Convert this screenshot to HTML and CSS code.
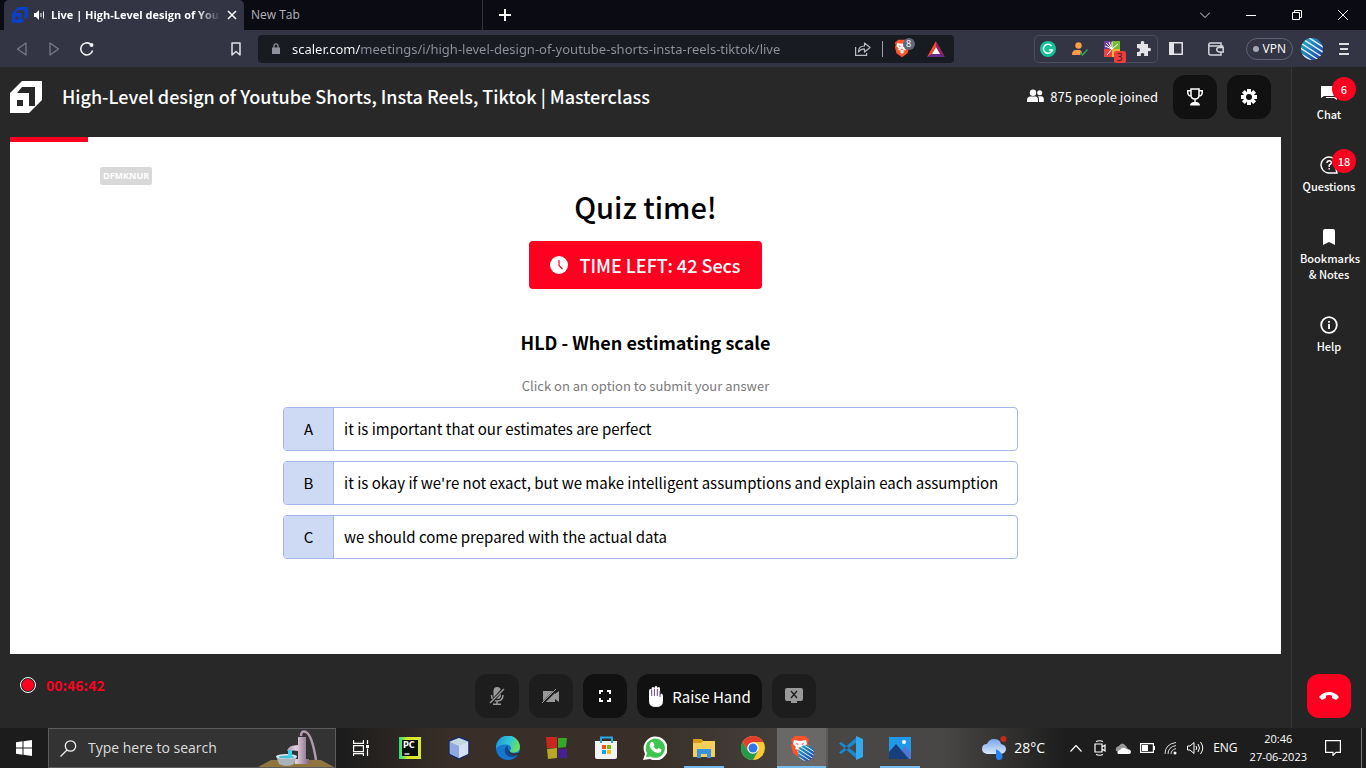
FILE: index.html
```html
<!DOCTYPE html>
<html lang="en">
<head>
<meta charset="utf-8">
<title>Live | High-Level design of Youtube Shorts, Insta Reels, Tiktok</title>
<link rel="stylesheet" href="styles.css">
</head>
<body>
<svg class="defs" width="0" height="0" aria-hidden="true">
  <defs>
    <symbol id="cube" viewBox="0 0 32 32"><path fill-rule="evenodd" d="M0 12 12 0H32V19L19 32H0ZM7 12H19V25H25V6H12ZM7 19V25H13V19Z"/></symbol>
    <symbol id="lion" viewBox="0 0 20 24"><path fill="#fb542b" d="M5 1h10l2 2 2 1-1 4 1 2-2 8-7 5-7-5-2-8 1-2-1-4 2-1z"/><path fill="#fff" d="M4 5l6 1 6-1 1 4-3 3 1 2-5 1-5-1 1-2-3-3zM7 16l3-1 3 1-3 3z"/><path fill="#fb542b" d="M6 8l3 1-2 1zM14 8l-3 1 2 1zM8 13l2-1 2 1-2 1z"/></symbol>
    <symbol id="globe" viewBox="0 0 22 22"><clipPath id="gc"><circle cx="11" cy="11" r="11"/></clipPath><linearGradient id="gg" x1="0" y1="0" x2="1" y2="1"><stop offset="0" stop-color="#2fb4c8"/><stop offset=".6" stop-color="#1e6bb5"/><stop offset="1" stop-color="#2a2fa8"/></linearGradient><g clip-path="url(#gc)"><path fill="url(#gg)" d="M0 0h22v22H0z"/><path d="M2-4 30 14M0 0 28 18M-2 4 26 22M-4 8 24 26M-6 12 22 30" stroke="#e8f6fb" stroke-width="1.3"/></g></symbol>
  </defs>
</svg>

<header class="tabstrip">
  <div class="tab tab-active">
    <svg class="tab-logo" width="16" height="16" fill="#0b3fc4"><use href="#cube"/></svg>
    <svg width="11" height="10" viewBox="0 0 11 10" fill="#fff"><path d="M0 3h2l3-3v10L2 7H0z"/><path d="M7 3v4M9.500 1.500v7" stroke="#fff" fill="none"/></svg>
    <span class="tab-title">Live | High-Level design of You</span>
    <button class="bare" aria-label="Close tab"><svg width="10" height="10" viewBox="0 0 10 10" stroke="#fff" stroke-width="1.500"><path d="M1 1l8 8M9 1 1 9"/></svg></button>
  </div>
  <div class="tab tab-idle">New Tab</div>
  <button class="bare new-tab" aria-label="New tab"><svg width="12" height="12" viewBox="0 0 12 12" stroke="#fff" stroke-width="2"><path d="M6 0v12M0 6h12"/></svg></button>
  <div class="window-buttons">
    <button class="bare" aria-label="Search tabs"><svg width="10" height="6" viewBox="0 0 10 6" fill="none" stroke="#ddd"><path d="M0 .5l5 5 5-5"/></svg></button>
    <button class="bare" aria-label="Minimize"><svg width="10" height="10" viewBox="0 0 10 10" stroke="#fff"><path d="M0 5.500h10"/></svg></button>
    <button class="bare" aria-label="Restore"><svg width="10" height="10" viewBox="0 0 10 10" fill="none" stroke="#fff"><path d="M.5 2.500h7v7h-7zM2.500 2.500v-2h7v7h-2"/></svg></button>
    <button class="bare" aria-label="Close"><svg width="10" height="10" viewBox="0 0 10 10" stroke="#fff"><path d="M0 0l10 10M10 0 0 10"/></svg></button>
  </div>
</header>

<nav class="toolbar" aria-label="Browser">
  <div class="nav-buttons">
    <button class="bare" aria-label="Back"><svg width="12" height="14" viewBox="0 0 12 14" fill="none" stroke="#777986" stroke-width="1.300"><path d="M10 1v12L1.500 7z" stroke-linejoin="round"/></svg></button>
    <button class="bare" aria-label="Forward"><svg width="12" height="14" viewBox="0 0 12 14" fill="none" stroke="#777986" stroke-width="1.300"><path d="M2 1v12l8.500-6z" stroke-linejoin="round"/></svg></button>
    <button class="bare" aria-label="Reload"><svg width="14" height="14" viewBox="0 0 14 14" fill="none" stroke="#eee" stroke-width="1.600"><path d="M12.600 8.500A6 6 0 1 1 10.500 2.200"/><circle cx="11.500" cy="3" r="2" fill="#eee" stroke="none"/></svg></button>
  </div>
  <button class="bare" aria-label="Bookmark"><svg width="10" height="14" viewBox="0 0 10 14" fill="none" stroke="#e2e2e6" stroke-width="1.500"><path d="M1 1h8v12L5 9.500 1 13z" stroke-linejoin="round"/></svg></button>
  <div class="urlbar">
    <svg width="8" height="11" viewBox="0 0 8 11" fill="#8f929c"><path d="M0 4.500h8V11H0z"/><path d="M2 5V2.800a2 2 0 0 1 4 0V5" fill="none" stroke="#8f929c" stroke-width="1.300"/></svg>
    <input class="url" aria-label="Address" value="scaler.com/meetings/i/high-level-design-of-youtube-shorts-insta-reels-tiktok/live">
    <svg width="16" height="14" viewBox="0 0 16 14" fill="none" stroke="#b9bbc2" stroke-width="1.200"><path d="M.6 5v8.400h11V11"/><path d="M3.500 10q0-6 6-6V1l5.500 4.500L9.500 10V7q-3.500-.3-6 3z" stroke-linejoin="round"/></svg>
    <span class="url-rule"></span>
    <span class="shield"><svg width="16" height="19"><use href="#lion"/></svg><span class="shield-count">8</span></span>
    <svg width="18" height="16" viewBox="0 0 18 16"><path fill="#ff4724" d="M9 0 0 16l5-3 4-7z"/><path fill="#9e1f63" d="m9 0 9 16-5-3-4-7z"/><path fill="#662d91" d="M0 16h18l-5-3H5z"/><path fill="#fff" d="m9 6 4 7H5z"/></svg>
  </div>
  <div class="extensions">
    <svg width="16" height="16" viewBox="0 0 16 16"><circle cx="8" cy="8" r="8" fill="#15c39a"/><path d="M11.500 5A4.500 4.500 0 1 0 12.300 9H9" fill="none" stroke="#fff" stroke-width="1.500"/></svg>
    <svg width="16" height="14" viewBox="0 0 16 14"><circle cx="6.500" cy="3.500" r="3.200" fill="#ff9d45"/><path d="M0 13q0-5 4-5h4l2 2-2 3z" fill="#ff9d45"/><path d="m8.500 10.500 2 2.500 5-5.500" fill="none" stroke="#1fab5c" stroke-width="1.500"/></svg>
    <span class="ext-burst"><svg width="16" height="16" viewBox="0 0 16 16"><path fill="#7439a0" d="M0 0h8v8H0z"/><path fill="#74bb34" d="M8 0h8v8H8z"/><path fill="#f04242" d="M0 8h8v8H0z"/><path fill="#e8b53a" d="M8 8h8v8H8z"/><path d="M8 8 2 2M8 8V1M8 8l6-5M8 8l-5 6M8 8 5 1M8 8 1 5" stroke="#fff"/></svg><span class="burst-count">3</span></span>
    <svg width="15" height="15" viewBox="0 0 15 15" fill="#e4e4e8"><path d="M1 3h4q-1-3 1.500-3T8 3h4v4q3-1 3 1.500T12 10v5H8q1-3-1.500-3T5 15H1v-4q3 0 3-2T1 7z"/></svg>
  </div>
  <button class="bare" aria-label="Sidebar"><svg width="14" height="13" viewBox="0 0 14 13"><path d="M.8.800h12.400v11.400H.8z" fill="none" stroke="#e4e4e8" stroke-width="1.500"/><path d="M1 1h4v11H1z" fill="#e4e4e8"/></svg></button>
  <button class="bare" aria-label="Wallet"><svg width="16" height="14" viewBox="0 0 16 14" fill="none" stroke="#d4d4da" stroke-width="1.500"><path d="M13 4V1H2.500q-1.700 0-1.700 2v8q0 2 2 2H13v-3M1 4h13.500v2M15.200 5.500h-4q-2.500 0-2.500 2T11 10h4.200z"/></svg></button>
  <button class="vpn">VPN</button>
  <button class="bare" aria-label="Profile"><svg width="22" height="22"><use href="#globe"/></svg></button>
  <button class="bare" aria-label="Menu"><svg width="10" height="12" viewBox="0 0 10 12" stroke="#dedee2" stroke-width="2"><path d="M0 1h10M1 6h8M0 11h10"/></svg></button>
</nav>

<div class="app">
  <main class="meeting">
    <header class="meeting-head">
      <svg width="32" height="32" fill="#fff"><use href="#cube"/></svg>
      <h1 class="title">High-Level design of Youtube Shorts, Insta Reels, Tiktok | Masterclass</h1>
      <div class="joined"><svg width="17" height="14" viewBox="0 0 17 14" fill="#fff"><circle cx="6" cy="3.700" r="3.200"/><path d="M0 13V11q0-3.500 3.500-3.500h5Q11 7.500 11 11v2z"/><circle cx="12.700" cy="3.700" r="2.500"/><path d="M12 13v-3q0-1.800-1-2.700h3q2.800 0 2.800 3V13z"/></svg>875 people joined</div>
      <button class="tile" aria-label="Leaderboard"><svg width="16" height="18" viewBox="0 0 16 18" fill="none" stroke="#fff" stroke-width="1.500"><path d="M4 1h8v6q0 4-4 4T4 7zM4 2.800H.8V5Q1 8 4.500 8M12 2.800h3.200V5Q15 8 11.500 8M8 11v3"/><path d="M3 17.500q0-2.500 3-3.500h4q3 1 3 3.500z" fill="#fff" stroke="none"/></svg></button>
      <button class="tile" aria-label="Settings"><svg width="18" height="18" viewBox="0 0 18 18"><path d="M7 1h4v16H7zM1 7h16v4H1z" fill="#fff"/><path d="M7 1h4v16H7zM1 7h16v4H1z" fill="#fff" transform="rotate(45 9 9)"/><circle cx="9" cy="9" r="3" fill="#111"/></svg></button>
    </header>

    <section class="stage">
      <div class="progress"></div>
      <span class="watermark">DFMKNUR</span>
      <div class="quiz">
        <h2 class="quiz-title">Quiz time!</h2>
        <div class="timer"><svg width="18" height="18" viewBox="0 0 18 18"><circle cx="9" cy="9" r="9" fill="#fff"/><path d="M9 4v5.500l3.500 3.500" fill="none" stroke="#ff0020" stroke-width="1.200"/></svg>TIME LEFT: 42 Secs</div>
        <h3 class="question">HLD - When estimating scale</h3>
        <p class="hint">Click on an option to submit your answer</p>
        <div class="options">
          <button class="option"><span class="letter">A</span><span class="answer">it is important that our estimates are perfect</span></button>
          <button class="option"><span class="letter">B</span><span class="answer">it is okay if we're not exact, but we make intelligent assumptions and explain each assumption</span></button>
          <button class="option"><span class="letter">C</span><span class="answer">we should come prepared with the actual data</span></button>
        </div>
      </div>
    </section>

    <footer class="controls">
      <div class="recording"><span class="rec-dot"></span>00:46:42</div>
      <div class="control-row">
        <button class="tile" disabled aria-label="Microphone"><svg width="16" height="18" viewBox="0 0 16 18"><path d="M4.500 4q0-4 3.700-4t3.700 4v5q0 3-3.700 3T4.500 9z" fill="#999"/><path d="M2.500 8q0 6 5.700 6T14 8M8 14v3M4 17.200h8" fill="none" stroke="#999" stroke-width="1.500"/><path d="M15 1 1 17" stroke="#1d1d1d" stroke-width="3"/><path d="M15 2 1 16" stroke="#999" stroke-width="1.500"/></svg></button>
        <button class="tile" disabled aria-label="Camera"><svg width="18" height="14" viewBox="0 0 18 14"><path d="M1 2h12v3l4-3v11l-4-3v3H1z" fill="#999"/><path d="M15 0 1 14" stroke="#1d1d1d" stroke-width="2.500"/><path d="M14 0 0 14" stroke="#999"/></svg></button>
        <button class="tile" aria-label="Full screen"><svg width="14" height="12" viewBox="0 0 14 12" fill="none" stroke="#fff" stroke-width="2"><path d="M2 4V1h3M9 1h3v3M12 8v3H9M5 11H2V8"/></svg></button>
        <button class="tile raise"><svg width="16" height="21" viewBox="0 0 16 21"><path d="M1 5q0-2 1.300-2t1.200 2V3q0-2 1.500-2t1.500 2V2Q6.500 0 8 0t1.500 2v1q0-2 1.300-2T12 3v7q.2-2.500 1.500-2.500T15 10v5q0 6-7 6t-7-6z" fill="#fff"/><path d="M3.700 4v6M6.400 3v7M9.300 3v7M12 5v6" stroke="#6b4a72"/></svg>Raise Hand</button>
        <button class="tile" disabled aria-label="Share screen"><svg width="18" height="16" viewBox="0 0 18 16"><path d="M2 0h14q2 0 2 2v9q0 2-2 2h-4v2H6v-2H2q-2 0-2-2V2q0-2 2-2z" fill="#999"/><path d="m6 3 6 7M12 3l-6 7" stroke="#1d1d1d" stroke-width="1.300"/></svg></button>
      </div>
      <div></div>
    </footer>
  </main>

  <aside class="side">
    <button class="side-item"><span class="side-icon"><svg width="16" height="16" viewBox="0 0 16 16" fill="#fff"><path d="M0 1h12q1 0 1 1v8q0 1-1 1H3l-3 2z"/><path d="M14 4h2v11l-3-2H5v-1h9z"/></svg><span class="badge">6</span></span>Chat</button>
    <button class="side-item"><span class="side-icon"><svg width="18" height="18" viewBox="0 0 18 18" fill="none" stroke="#fff" stroke-width="1.400"><path d="M17 17h-8A8 8 0 1 1 16 13z"/><path d="M7 7q0-2.300 2.200-2.300T11.300 7Q11 8 9.200 9.200V11M9.200 12v1.500"/></svg><span class="badge">18</span></span>Questions</button>
    <button class="side-item"><span class="side-icon"><svg width="12" height="16" viewBox="0 0 12 16" fill="#fff"><path d="M0 2q0-2 2-2h8q2 0 2 2v14l-6-3-6 3z"/></svg></span>Bookmarks &amp; Notes</button>
    <button class="side-item"><span class="side-icon"><svg width="18" height="18" viewBox="0 0 18 18" fill="none" stroke="#fff" stroke-width="1.800"><circle cx="9" cy="9" r="7.800"/><path d="M9 8v5M9 5v1.800"/></svg></span>Help</button>
    <button class="tile hang-up" aria-label="Leave"><svg width="20" height="8" viewBox="0 0 20 8" fill="#fff"><path d="M0 5q4-5 10-5t10 5l-3 3-4-2V3.500q-3-.8-6 0V6L3 8z"/></svg></button>
  </aside>
</div>

<footer class="taskbar">
  <button class="bare start" aria-label="Start"><svg width="16" height="16" viewBox="0 0 16 16" fill="#fff"><path d="M0 2.200 6.500 1.300v6.200H0zM7.500 1.200 16 0v7.500H7.500zM0 8.500h6.500v6.200L0 13.800zM7.500 8.500H16V16l-8.500-1.200z"/></svg></button>
  <div class="search">
    <svg width="17" height="17" viewBox="0 0 17 17" fill="none" stroke="#eee" stroke-width="1.300"><circle cx="10.500" cy="6" r="5.200"/><path d="M7 10 .5 16.500"/></svg>
    <input class="search-input" type="search" aria-label="Search" placeholder="Type here to search">
    <svg class="pump" width="77" height="38" viewBox="0 0 77 38"><linearGradient id="pm"><stop offset="0" stop-color="#a892a8"/><stop offset=".4" stop-color="#e4cfe0"/><stop offset="1" stop-color="#826880"/></linearGradient><path d="M0 38 13 31h50l13 7z" fill="#8f7440"/><path d="M43 7Q43 1 48 3q6 3 10 28" fill="none" stroke="#b39aaf" stroke-width="2.500"/><path d="M40 8h8v22h3v5H37v-5h3V22q-5-1-7 0h-4q1-6 11-6z" fill="url(#pm)"/><path d="M18 27h21l-3 8q-7 4-15 0z" fill="#a9b3b8"/><ellipse cx="28.500" cy="27.500" rx="10.500" ry="2.500" fill="#dce9ec"/><ellipse cx="28.500" cy="28" rx="8" ry="1.500" fill="#47bccf"/><path d="M30 21h4v7h-4z" fill="#35d3f4"/></svg>
  </div>
  <div class="apps">
    <button class="app-icon" aria-label="Task view"><svg width="16" height="16" viewBox="0 0 16 16" fill="none" stroke="#fff" stroke-width="1.200"><path d="M.6 0v3.400h9.800V0M.6 5.600h9.800v6H.6zM.6 16v-2.400h9.800V16M14.500 0v4M14.500 8.500V16"/><path d="M13 5h3v3h-3z" fill="#fff" stroke="none"/></svg></button>
    <button class="app-icon" aria-label="PyCharm"><svg width="22" height="22" viewBox="0 0 22 22"><linearGradient id="pc"><stop offset="0" stop-color="#25dc83"/><stop offset=".4" stop-color="#d9e82c"/></linearGradient><path d="M0 0h22v22H0z" fill="url(#pc)"/><path d="M3 3h16v16H3z" fill="#08110c"/><path d="M5.500 17h5" stroke="#fff" stroke-width="1.300"/><text x="4" y="11" class="pc-text">PC</text></svg></button>
    <button class="app-icon" aria-label="VirtualBox"><svg width="22" height="24" viewBox="0 0 22 24" stroke="#1b2862" stroke-linejoin="round"><path d="m11 1 10 4v13l-10 5L1 18V5z" fill="#c4d7df" stroke-width="1.500"/><path d="m2 6 9 4v12l-9-4z" fill="#8fa9e0" stroke="none"/><path d="m20 6-9 4v12l9-4z" fill="#d4e0f6" stroke="none"/></svg></button>
    <button class="app-icon" aria-label="Edge"><svg width="24" height="24" viewBox="0 0 24 24"><linearGradient id="ed" x2="1" y2=".3"><stop offset="0" stop-color="#1b8ed8"/><stop offset=".6" stop-color="#31c5d7"/><stop offset="1" stop-color="#66e064"/></linearGradient><circle cx="12" cy="12" r="12" fill="#1577d0"/><path d="M0 12A12 12 0 0 1 24 11q0 5-5.500 5.500-5 .5-5-2 2-1 1.500-3-1-3-5-3-7 0-10 4z" fill="url(#ed)"/><path d="M13 14q-2-2-1-5-4 3-3 7 2 6 9 5 2-1 4-3-6 2-9-4z" fill="#114a8b"/><path d="M13.300 14.500q1 4 8.700 2.500l2-1v3h-4q-6 1-6.700-4.500z" fill="#352d28"/></svg></button>
    <button class="app-icon" aria-label="Color blocks"><svg width="22" height="22" viewBox="0 0 22 22"><path d="M0 0h11v11H1z" fill="#c9261f"/><path d="M12 1h9l-1 9-8 1z" fill="#35a829"/><path d="m1 12 10-1v10l-9 1z" fill="#b8a825"/><path d="M12 12h9v9h-9z" fill="#46208e"/></svg></button>
    <button class="app-icon" aria-label="Store"><svg width="24" height="24" viewBox="0 0 24 24"><path d="M7 7V1.500h11V7" fill="none" stroke="#27a9e8" stroke-width="2"/><path d="M1 5h22v16q0 2-2 2H3q-2 0-2-2z" fill="#f3f3f3"/><path d="M7 7V4M18 7V4" stroke="#27a9e8" stroke-width="2"/><path fill="#f15325" d="M8 9h4v4H8z"/><path fill="#7eba00" d="M13 9h4v4h-4z"/><path fill="#05a6f0" d="M8 14h4v4H8z"/><path fill="#ffba08" d="M13 14h4v4h-4z"/></svg></button>
    <button class="app-icon" aria-label="WhatsApp"><svg width="24" height="24" viewBox="0 0 24 24"><path d="m0 24 2-6A12 12 0 1 1 7 23z" fill="#fff"/><path d="m3 21 1-4a9.600 9.600 0 1 1 3.500 3.500z" fill="#3fc351"/><path d="M8 6h2l1.500 3-1 1.500q1 2 3.500 3l1.500-1.500 3 1.500q0 3-3 3.500-6 0-9-7Q7 8 8 6z" fill="#fff"/></svg></button>
    <button class="app-icon running" aria-label="File Explorer"><svg width="22" height="19" viewBox="0 0 22 19"><path d="M0 0h8l2 2h12v16H0z" fill="#f8cf5a"/><path d="M0 0h8l2 2-2 2H0z" fill="#d99b16"/><path d="M4 10h14v9h-4v-4H8v4H4z" fill="#3994dd"/></svg></button>
    <button class="app-icon" aria-label="Chrome"><svg width="24" height="24" viewBox="0 0 24 24"><circle cx="12" cy="12" r="12" fill="#fdc831"/><path d="M1.600 6A12 12 0 0 1 22.400 6H12L7 15z" fill="#e33d2e"/><path d="M1.600 6A12 12 0 0 0 12 24l5.200-9H7z" fill="#269a4b"/><circle cx="12" cy="12" r="5.800" fill="#fff"/><circle cx="12" cy="12" r="4.500" fill="#2f78e8"/></svg></button>
    <button class="app-icon running current" aria-label="Brave"><svg width="24" height="26" viewBox="0 0 24 26"><use href="#lion" width="20" height="24"/><use href="#globe" x="8" y="10" width="16" height="16"/></svg></button>
    <button class="app-icon" aria-label="Visual Studio Code"><svg width="24" height="24" viewBox="0 0 24 24"><path d="M0 7.500 2 6l16 12v5zM0 16.500 2 18 18 6V1z" fill="#168bd4"/><path d="m17 0 7 3v18l-7 3z" fill="#34a9ee"/></svg></button>
    <button class="app-icon running" aria-label="Photos"><svg width="22" height="22" viewBox="0 0 22 22"><path d="M0 0h22v22H0z" fill="#2099e8"/><path d="m12 14 4-5 6 7v6H12z" fill="#5078d2"/><path d="m0 15 7-8 13 15H0z" fill="#173e7c"/><circle cx="15" cy="5" r="2" fill="#fff"/></svg></button>
  </div>
  <div class="weather"><svg width="25" height="24" viewBox="0 0 25 24"><linearGradient id="cl" x2="0" y2="1"><stop offset="0" stop-color="#78a5ef"/><stop offset="1" stop-color="#d9e7fb"/></linearGradient><path d="M5 18Q0 17 0 13q0-5 5-5 2-5 7-5 6 0 7 5 5 1 5 5t-5 5z" fill="url(#cl)"/><path d="M14 13q7 4 6.500 8-.5 3-3.500 3t-3-3z" fill="#2583f6"/><circle cx="21.500" cy="3" r="3" fill="#c42b1c"/></svg>28°C</div>
  <div class="tray">
    <svg class="tray-more" width="12" height="7" viewBox="0 0 12 7" fill="none" stroke="#fff" stroke-width="1.200"><path d="m.5 6.500 5.500-6 5.500 6"/></svg>
    <svg width="12" height="16" viewBox="0 0 12 16" fill="none" stroke="#fff" stroke-width="1.200"><path d="M1 4h7v8H1zM8 7l3-2v6L8 9M2 1.500q4-1.500 7 0M2 14.500q4 1.500 7 0"/></svg>
    <svg width="16" height="11" viewBox="0 0 16 11"><path d="M1 8Q0 4 4 3q3-5 7 0l2 3-6 3z" fill="#999"/><path d="M3 11q-2-3 2-4 3-4 6-1 5 0 5 3 0 2-2 2z" fill="#fff"/></svg>
    <svg width="15" height="10" viewBox="0 0 15 10"><path d="M.6.600h12.800v8.800H.6z" fill="none" stroke="#fff" stroke-width="1.200"/><path d="M2 2h6v6H2zM14 3h1v4h-1z" fill="#fff"/></svg>
    <svg width="14" height="14" viewBox="0 0 14 14" fill="none" stroke="#ddd"><path d="M1 13Q1 3 12 1.500M4 13q0-7 8-8.500M7 13q0-4 5-5.500"/><circle cx="11" cy="12" r="1.500" fill="#fff" stroke="none"/></svg>
    <svg width="17" height="14" viewBox="0 0 17 14" fill="none" stroke="#fff"><path d="M.5 5h2.500L7 1.500v11L3 9H.5zM9 5q1.500 2 0 4M11 3q3 4 0 8M13.500 1q4.500 6 0 12"/></svg>
    <span class="lang">ENG</span>
    <div class="clock"><span>20:46</span><span>27-06-2023</span></div>
    <svg width="16" height="16" viewBox="0 0 16 16" fill="none" stroke="#fff" stroke-width="1.200"><path d="M.6.600h14.800v11.800H11L8 15.400v-3H.6z"/></svg>
  </div>
</footer>
</body>
</html>
```
FILE: styles.css
```css
* { box-sizing: border-box; }

body {
  margin: 0;
  min-height: 100vh;
  display: flex;
  flex-direction: column;
  background: #282828;
  color: #fff;
  font-family: "Noto Sans CJK SC", "Noto Sans", sans-serif;
}

svg { display: block; flex: none; }
.defs { position: absolute; }
button, input { font: inherit; color: inherit; }

.bare {
  display: flex;
  align-items: center;
  justify-content: center;
  padding: 0;
  border: 0;
  background: none;
}

/* Browser tabs */
.tabstrip {
  display: flex;
  height: 30px;
  padding-left: 4px;
  background: #0b0b14;
  font: 12px/16px "Open Sans", "Noto Sans", sans-serif;
}
.tab { display: flex; align-items: center; }
.tab-active {
  width: 240px;
  gap: 6px;
  padding: 0 7px 0 8px;
  border-radius: 5px 5px 0 0;
  background: #333545;
}
.tab-title {
  flex: 1;
  overflow: hidden;
  white-space: nowrap;
  font-size: 11px;
  font-weight: 700;
  mask-image: linear-gradient(90deg, #000 85%, transparent);
}
.tab-idle {
  width: 239px;
  padding: 0 7px;
  border-right: 1px solid #34343c;
  color: #b4b4ba;
}
.new-tab { width: 44px; }
.window-buttons { display: flex; margin-left: auto; }
.window-buttons .bare { width: 46px; }

/* Browser toolbar */
.toolbar {
  display: flex;
  align-items: center;
  height: 37px;
  padding: 0 17px 0 16px;
  background: #333545;
  font: 13px/16px "Open Sans", "Noto Sans", sans-serif;
}
.nav-buttons { display: flex; gap: 20px; margin-right: 137px; }
.urlbar {
  display: flex;
  flex: 1;
  align-items: center;
  height: 28px;
  margin: 0 80px 0 17px;
  padding: 0 9px 0 14px;
  border-radius: 4px;
  background: #191b22;
}
.url {
  flex: 1;
  min-width: 0;
  margin-left: 12px;
  padding: 0;
  border: 0;
  outline: 0;
  font-family: "Noto Sans", sans-serif;
  background: linear-gradient(90deg, #fff 68px, #9092a0 68px);
  background-clip: text;
  -webkit-text-fill-color: transparent;
}
.url-rule { width: 1px; height: 16px; margin: 0 11px; background: #a0a1a8; }
.shield { position: relative; margin-right: 17px; }
.shield-count {
  position: absolute;
  top: -1px;
  left: 9px;
  width: 12px;
  border-radius: 6px;
  background: #62677a;
  font-size: 9px;
  line-height: 12px;
  text-align: center;
}
.extensions {
  display: flex;
  align-items: center;
  gap: 16px;
  height: 28px;
  margin-right: 11px;
  padding: 0 6px 0 5px;
  border: 1px solid #4b4e61;
  border-radius: 5px;
}
.ext-burst { position: relative; }
.burst-count {
  position: absolute;
  top: 10px;
  left: 10px;
  width: 12px;
  border-radius: 2px;
  background: #f23b3b;
  color: #222;
  font-size: 10px;
  line-height: 12px;
  text-align: center;
}
.toolbar > .bare + .bare { margin-left: 25px; }
.vpn {
  display: flex;
  align-items: center;
  gap: 4px;
  height: 22px;
  margin: 0 8px 0 22px;
  padding: 0 6px;
  border: 1px solid #5f6277;
  border-radius: 11px;
  background: none;
  font-size: 12px;
}
.vpn::before { content: ""; width: 6px; height: 6px; border-radius: 50%; background: #a5a7b5; }
.toolbar > .vpn + .bare + .bare { margin-left: 16px; }

/* Meeting */
.app { display: flex; flex: 1; }
.meeting { display: flex; flex: 1; flex-direction: column; min-width: 0; padding: 0 10px; }
.meeting-head { display: flex; align-items: center; height: 70px; padding: 0 10px 10px 0; }
.title { margin: 0 auto 0 20px; padding-bottom: 2px; font-size: 18px; font-weight: 500; line-height: 24px; white-space: nowrap; }
.joined { display: flex; align-items: center; gap: 6px; margin-right: 5px; padding-bottom: 2px; font-size: 13px; }
.tile {
  display: flex;
  align-items: center;
  justify-content: center;
  width: 44px;
  height: 44px;
  padding: 0;
  border: 0;
  border-radius: 12px;
  background: #111;
}
.tile:disabled { background: #1d1d1d; }
.meeting-head .tile { margin-left: 10px; }

.stage { position: relative; flex: 1; background: #fff; color: #000; }
.progress { width: 78px; height: 5px; background: #ff0020; }
.watermark {
  position: absolute;
  top: 30px;
  left: 90px;
  padding: 0 3px;
  border-radius: 2px;
  background: #d9d9d9;
  color: #fff;
  font: bold 9px/18px "Open Sans", sans-serif;
}
.quiz { display: flex; flex-direction: column; align-items: center; padding-top: 40px; }
.quiz-title { margin: 0 0 10px; font-size: 29px; font-weight: 500; line-height: 49px; }
.timer {
  display: flex;
  align-items: center;
  gap: 11px;
  height: 48px;
  padding: 0 21px;
  border-radius: 4px;
  background: #ff0020;
  color: #fff;
  font-size: 18px;
  font-weight: 500;
}
.question { margin: 41px 0 0; font-size: 18px; font-weight: 700; line-height: 24px; }
.hint { margin: 22px 0 11px; color: #7b7b7b; font-size: 13px; line-height: 20px; }
.options { display: grid; gap: 10px; width: 735px; max-width: 100%; margin-left: 10px; }
.option {
  display: flex;
  height: 44px;
  padding: 0;
  overflow: hidden;
  border: 1px solid #a4b8e8;
  border-radius: 4px;
  background: #fff;
  color: #000;
  font-size: 15px;
  font-weight: 400;
  line-height: 42px;
  text-align: left;
}
.letter { width: 50px; border-right: 1px solid #a4b8e8; background: #cedaf4; text-align: center; }
.answer { padding: 0 10px; }

.controls { display: grid; grid-template-columns: 1fr auto 1fr; height: 74px; padding-top: 20px; }
.recording { display: flex; align-items: center; gap: 10px; height: 22px; padding-left: 10px; color: #ff0020; font-size: 14px; font-weight: 700; }
.rec-dot { width: 16px; height: 16px; border: 1px solid #fff; border-radius: 50%; background: #ff0020 content-box; padding: 1px; }
.control-row { display: flex; gap: 10px; }
.raise { width: 125px; gap: 8px; font-size: 15px; }

.side {
  display: flex;
  flex-direction: column;
  align-items: center;
  width: 75px;
  padding: 16px 0 10px;
  border-left: 1px solid #363636;
  background: #252525;
}
.side-item {
  width: 74px;
  margin-bottom: 33px;
  padding: 0 8px;
  border: 0;
  background: none;
  font-size: 11px;
  font-weight: 500;
  line-height: 16px;
}
.side-icon { position: relative; display: flex; align-items: center; justify-content: center; height: 20px; margin: 0 20px 3px; }
.badge {
  position: absolute;
  top: -6px;
  left: 12px;
  width: 24px;
  height: 24px;
  border-radius: 50%;
  background: #ff0020;
  line-height: 24px;
}
.hang-up { margin-top: auto; background: #ff0020; }

/* Taskbar */
.taskbar {
  display: flex;
  height: 40px;
  padding-right: 4px;
  background: linear-gradient(90deg, #1c1c1c 25%, #392f28 33%, #392f28 47%, #494745 62%, #494745 69%, #1d1d1d 78%);
  font: 14px/18px "Open Sans", "Noto Sans", sans-serif;
}
.start { width: 48px; }
.search { display: flex; align-items: center; width: 288px; padding-left: 11px; border: 1px solid #5b5b5b; background: #333; }
.search-input { flex: 1; min-width: 0; margin-left: 11px; padding: 0; border: 0; outline: 0; background: none; }
.search-input::placeholder { color: #ddd; opacity: 1; }
.apps { display: flex; }
.app-icon {
  display: flex;
  align-items: center;
  justify-content: center;
  width: 49px;
  padding: 0;
  border: 0;
  background: none;
}
.running { background: linear-gradient(#76b9ed, #76b9ed) center bottom / 40px 2px no-repeat; }
.current { background-color: #6a6866; background-size: 100% 2px; box-shadow: 2px 0 #5b5958; }
.pc-text { fill: #fff; font: bold 8px "DejaVu Sans", sans-serif; }
.weather { display: flex; align-items: center; gap: 7px; margin-left: auto; }
.tray { display: flex; align-items: center; gap: 9px; margin-left: 25px; padding-right: 20px; border-right: 1px solid #777; font-size: 12px; }
.tray-more { margin-right: 3px; }
.clock { display: flex; flex-direction: column; align-items: center; margin: 0 9px 0 3px; font-size: 11px; }
```
